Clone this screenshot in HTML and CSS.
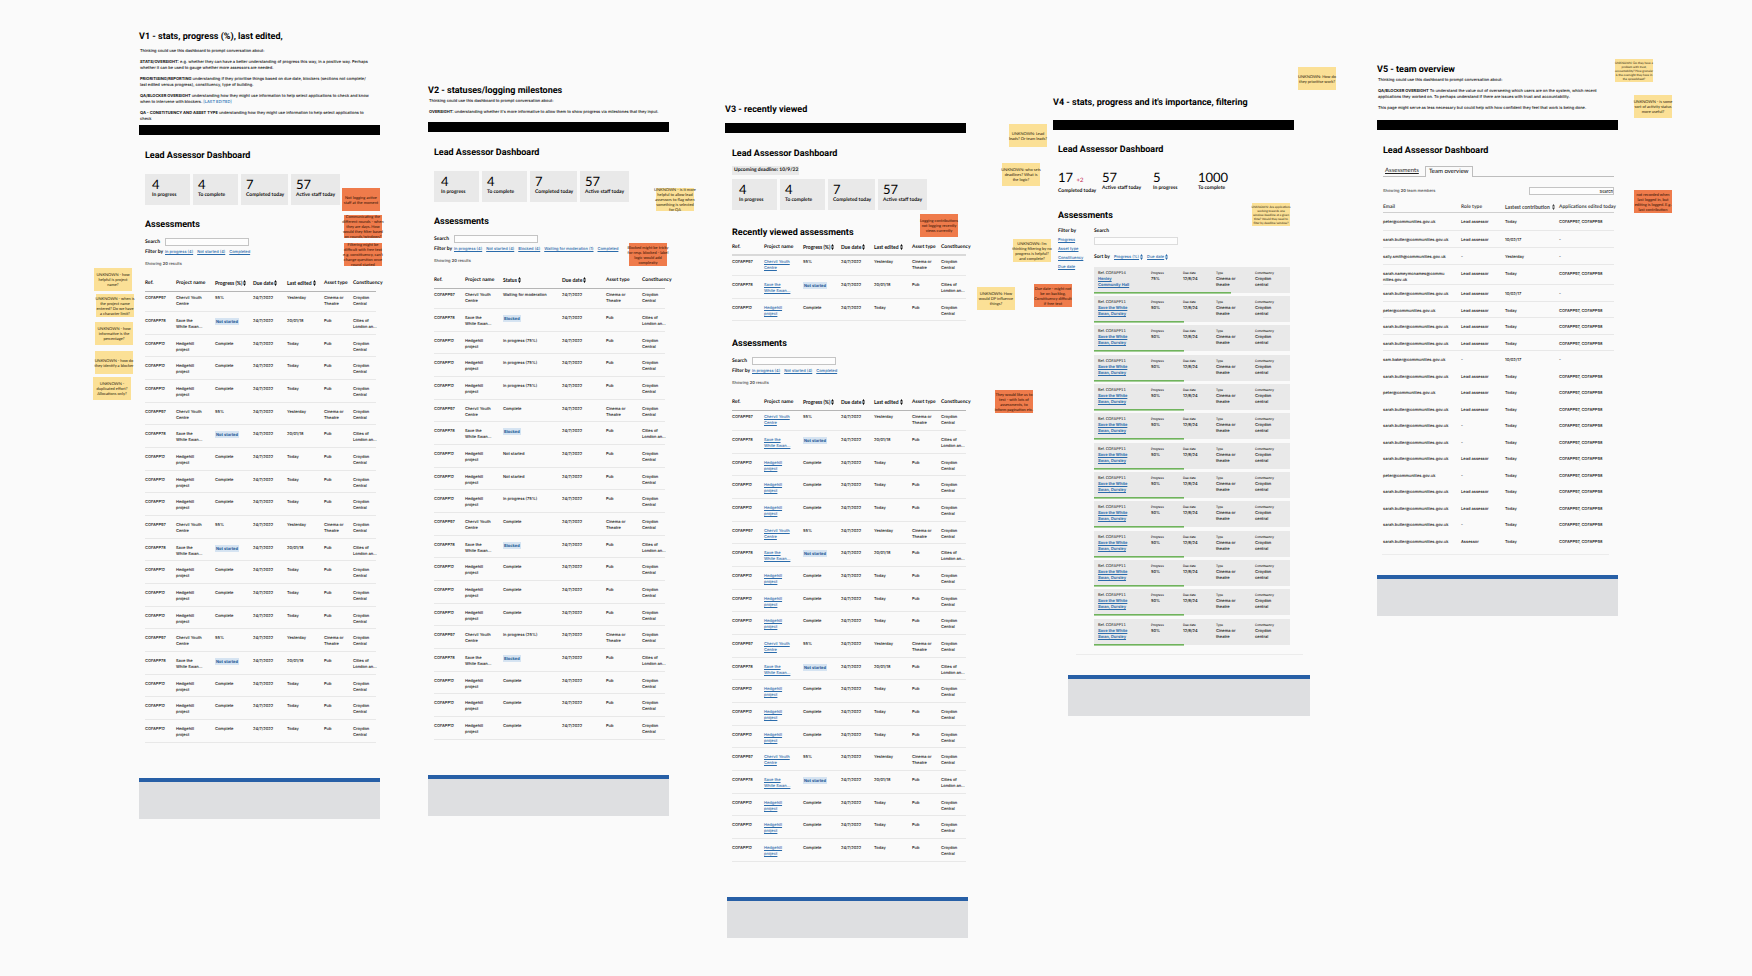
FILE: index.html
```
<!DOCTYPE html>
<html lang="en">
<head>
<meta charset="utf-8">
<title>Lead Assessor Dashboard concepts</title>
<link rel="stylesheet" href="styles.css">
</head>
<body>
<main class="canvas">

<section class="board board-v1">
  <h2 class="board-title">V1 - stats, progress (%), last edited,</h2>
  <div class="intro intro-spaced">
    <p>Thinking could use this dashboard to prompt conversation about:</p>
    <p><b>STATS/OVERSIGHT:</b> e.g. whether they can have a better understanding of progress this way, in a positive way. Perhaps<br>whether it can be used to gauge whether more assessors are needed.</p>
    <p><b>PRIORITISING/REPORTING</b> understanding if they prioritise things based on due date, blockers (sections not complete/<br>last edited versus progress), constituency, type of building.</p>
    <p><b>QA/BLOCKER OVERSIGHT</b> understanding how they might use information to help select applications to check and know<br>when to intervene with blockers. <span class="accent">[LAST EDITED]</span></p>
    <p><b>QA - CONSTITUENCY AND ASSET TYPE</b> understanding how they might use information to help select applications to<br>check</p>
  </div>
  <div class="topbar topbar-close"></div>
  <div class="page">
    <h1 class="heading">Lead Assessor Dashboard</h1>
    <div class="stats" data-stats></div>
    <h2 class="heading heading-section">Assessments</h2>
    <div class="search"><label for="s1">Search</label><input id="s1" type="text"></div>
    <nav class="filters"><b>Filter by</b><a href="#">In progress (4)</a><a href="#">Not started (4)</a><a href="#">Completed</a></nav>
    <p class="showing">Showing <b>20</b> results</p>
    <table class="grid" data-table="v1"></table>
  </div>
  <footer class="footer"></footer>
</section>

<section class="board board-v2">
  <h2 class="board-title">V2 - statuses/logging milestones</h2>
  <div class="intro">
    <p>Thinking could use this dashboard to prompt conversation about:</p>
    <p><b>OVERSIGHT:</b> understanding whether it's more informative to allow them to show progress via milestones that they input.</p>
  </div>
  <div class="topbar"></div>
  <div class="page">
    <h1 class="heading">Lead Assessor Dashboard</h1>
    <div class="stats" data-stats></div>
    <h2 class="heading heading-section">Assessments</h2>
    <div class="search"><label for="s2">Search</label><input id="s2" type="text"></div>
    <nav class="filters"><b>Filter by</b><a href="#">In progress (4)</a><a href="#">Not started (4)</a><a href="#">Blocked (4)</a><a href="#">Waiting for moderation (1)</a><a href="#">Completed</a></nav>
    <p class="showing">Showing <b>20</b> results</p>
    <table class="grid" data-table="v2"></table>
  </div>
  <footer class="footer"></footer>
</section>

<section class="board board-v3">
  <h2 class="board-title">V3 - recently viewed</h2>
  <div class="topbar"></div>
  <div class="page">
    <h1 class="heading">Lead Assessor Dashboard</h1>
    <p class="deadline">Upcoming deadline: 10/9/22</p>
    <div class="stats stats-close" data-stats></div>
    <h2 class="heading heading-wide">Recently viewed assessments</h2>
    <table class="grid grid-close" data-table="recent"></table>
    <h2 class="heading heading-wide">Assessments</h2>
    <div class="search"><label for="s3">Search</label><input id="s3" type="text"></div>
    <nav class="filters"><b>Filter by</b><a href="#">In progress (4)</a><a href="#">Not started (4)</a><a href="#">Completed</a></nav>
    <p class="showing">Showing <b>20</b> results</p>
    <table class="grid" data-table="v3"></table>
  </div>
  <footer class="footer footer-shift"></footer>
</section>

<section class="board board-v4">
  <h2 class="board-title">V4 - stats, progress and it's importance, filtering</h2>
  <div class="topbar topbar-far"></div>
  <div class="page">
    <h1 class="heading">Lead Assessor Dashboard</h1>
    <div class="totals">
      <div><strong>17 <small>+2</small></strong><span>Completed today</span></div>
      <div><strong>57</strong><span>Active staff today</span></div>
      <div><strong>5</strong><span>In progress</span></div>
      <div><strong>1000</strong><span>To complete</span></div>
    </div>
    <h2 class="heading heading-wide">Assessments</h2>
    <div class="browse">
      <nav class="facets"><b>Filter by</b><a href="#">Progress</a><a href="#">Asset type</a><a href="#">Constituency</a><a href="#">Due date</a></nav>
      <div>
        <div class="search search-stacked"><label for="s4">Search</label><input id="s4" type="text"></div>
        <div class="sortby"><b>Sort by</b><a href="#">Progress (%)<svg class="sort" viewBox="0 0 6 12"><path d="M0 5L3 0L6 5ZM0 7L3 12L6 7Z"/></svg></a><a href="#">Due date<svg class="sort" viewBox="0 0 6 12"><path d="M0 5L3 0L6 5ZM0 7L3 12L6 7Z"/></svg></a></div>
        <div class="cards" data-cards></div>
      </div>
    </div>
  </div>
  <hr class="rule">
  <footer class="footer footer-offset"></footer>
</section>

<section class="board board-v5">
  <h2 class="board-title">V5 - team overview</h2>
  <div class="intro">
    <p>Thinking could use this dashboard to prompt conversation about:</p>
    <p><b>QA/BLOCKER OVERSIGHT</b> To understand the value out of overseeing which users are on the system, which recent<br>applications they worked on. To perhaps understand if there are issues with trust and accountability.</p>
    <p>This page might serve as less necessary but could help with how confident they feel that work is being done.</p>
  </div>
  <div class="topbar"></div>
  <div class="page">
    <h1 class="heading">Lead Assessor Dashboard</h1>
    <nav class="tabs"><a href="#" class="tab">Assessments</a><a href="#" class="tab tab-active">Team overview</a></nav>
    <div class="teambar"><p>Showing <b>20</b> team members</p><input type="text" placeholder="Search" aria-label="Search"></div>
    <table class="grid grid-team" data-table="team"></table>
  </div>
  <hr class="rule rule-team">
  <footer class="footer footer-team"></footer>
</section>

<div data-notes></div>
</main>
<script src="boards.js"></script>
</body>
</html>
```
FILE: styles.css
```
* { box-sizing: border-box; margin: 0; padding: 0; }
body {
  background: #fafafa;
  color: #0b0b0b;
  font: 500 4px/6px Inter, "Liberation Sans", sans-serif;
  text-rendering: geometricPrecision;
}
.canvas { position: relative; min-height: 100vh; overflow: hidden; }
a { color: #2a6bab; text-decoration: underline; text-decoration-thickness: 1px; }
.accent { color: #2f78b8; }
input { font: inherit; color: inherit; appearance: none; border: 1px solid #c4c4c4; background: #fdfdfd; border-radius: 0; }

/* Boards */
.board { position: absolute; width: 241px; }
.board-v1 { left: 139px; top: 31px; }
.board-v2 { left: 428px; top: 85px; }
.board-v3 { left: 725px; top: 104px; }
.board-v4 { left: 1053px; top: 97px; }
.board-v5 { left: 1377px; top: 64px; }
.board-title, .heading { font: 700 9px/12px Roboto, sans-serif; color: #000; white-space: nowrap; }
.intro { white-space: nowrap; padding-left: 1px; padding-top: 1px; }
.intro-spaced { padding-top: 5px; }
.intro p + p { margin-top: 5px; }
.topbar { height: 10px; background: #000; margin-top: 7px; }
.topbar-close { margin-top: 3px; }
.topbar-far { margin-top: 11px; }
.board-v5 .topbar { margin-top: 9px; }
.page { padding: 15px 4px 0 6px; }
.board-v3 .page { padding: 15px 0 0 7px; }
.board-v4 .page { padding: 14px 4px 0 5px; }
.board-v5 .page { padding-left: 6px; }
.heading-section { margin-top: 14px; }
.heading-wide { margin-top: 17px; }
.board-v4 .heading-wide { margin-top: 16px; }

/* Statistics */
.stats { display: grid; grid-template-columns: 45px 45px 47px 49px; gap: 3px; margin-top: 12px; }
.stats-close { margin-top: 4px; }
.stat { height: 31px; background: #e9e9e9; padding: 3px 0 0 7px; white-space: nowrap; }
.stat + .stat { padding-left: 5px; }
.stat strong, .totals strong { display: block; font: 400 13px/15px Lato, sans-serif; color: #000; }
.stat span, .totals span { display: block; font: 700 5px/6px Lato, sans-serif; }
.deadline { width: 67px; height: 9px; margin-top: 6px; padding-left: 2px; background: #e9e9e9; font: 700 5px/9px Lato, sans-serif; white-space: nowrap; }
.totals { display: grid; grid-template-columns: 44px 51px 45px 1fr; margin-top: 14px; white-space: nowrap; }
.totals small { font-size: 6px; color: #c2224f; }

/* Search and filters */
.search { display: flex; align-items: center; margin-top: 7px; }
.search label, .filters b, .facets b, .sortby b { width: 20px; font: 700 5px/6px Lato, sans-serif; white-space: nowrap; }
.search input { width: 84px; height: 8px; }
.search-stacked { display: block; margin-top: 0; }
.search-stacked label { display: block; margin-bottom: 3px; }
.search-stacked input { display: block; border-color: #dcdcdc; }
.filters { display: flex; margin-top: 3px; white-space: nowrap; }
.filters a { margin-right: 4px; }
.filters a:last-child { margin-right: 0; }
.showing { margin-top: 6px; color: #505050; }
.teambar { display: flex; justify-content: space-between; align-items: center; margin-top: 10px; color: #505050; }
.teambar input { width: 85px; height: 8px; text-align: right; }
.teambar input::placeholder { color: #222; }

/* Tables */
.grid { width: 100%; table-layout: fixed; border-collapse: separate; border-spacing: 0; margin-top: 10px; }
.board-v3 .grid { width: 234px; }
.grid-close { margin-top: 2px; }
.grid th { height: 15px; padding-top: 3px; vertical-align: top; text-align: left; font: 700 5px/6px Lato, sans-serif; white-space: nowrap; border-bottom: 1px solid #b5b5b5; }
.grid button { font: inherit; color: inherit; border: 0; background: none; }
.sort { width: 3px; height: 6px; margin-left: 1px; fill: currentColor; vertical-align: bottom; }
.grid td { height: 23px; padding-top: 6px; vertical-align: top; white-space: nowrap; border-bottom: 1px solid #e8e8e8; }
.grid tbody tr:nth-child(3n) td { height: 22px; }
.grid tbody tr:first-child td { height: 20px; padding-top: 3px; }
.grid-close th { border-bottom: 2px solid #d9d9d9; }
.badge { display: inline-block; height: 7px; padding: 0 1px; background: #d6e4f2; color: #1d5a96; font-weight: 700; line-height: 7px; }
.grid-team { margin-top: 4px; }
.grid-team th { height: 14px; padding-top: 5px; color: #444; border-color: #cfcfcf; }
.grid-team tbody tr td { height: 17px; padding-top: 6px; }
.grid-team tbody tr:first-child td { height: 18px; padding-top: 6px; }
.grid-team tbody tr:nth-child(3n) td { height: 17px; }
.grid-team tbody tr:nth-child(4) td { height: 20px; }
.grid-team tbody tr:nth-child(n+6):nth-child(even) td { height: 16px; }
.grid-team tbody tr:nth-child(n+9) td { border-color: transparent; }

/* Tabs */
.tabs { display: flex; height: 11px; margin-top: 9px; padding-left: 2px; border-bottom: 1px solid #bdbdbd; font-size: 6px; line-height: 9px; }
.tab { width: 40px; color: #222; font: 400 6px/9px Lato, sans-serif; white-space: nowrap; }
.tab-active { width: 48px; height: 11px; padding-left: 3px; line-height: 10px; border: 1px solid #bdbdbd; border-bottom: 0; background: #fafafa; text-decoration: none; color: #000; }

/* Cards */
.browse { display: grid; grid-template-columns: 36px 1fr; margin-top: 6px; }
.facets { display: flex; flex-direction: column; align-items: flex-start; gap: 3px; }
.sortby { display: flex; margin-top: 9px; white-space: nowrap; }
.sortby a { margin-right: 4px; }
.cards { margin-top: 7px; }
.card { display: grid; grid-template-columns: 53px 32px 33px 39px 1fr; position: relative; height: 26px; margin-bottom: 3px; padding: 3px 0 0 4px; background: #e9e9e9; white-space: nowrap; }
.card:nth-child(3n) { margin-bottom: 4px; }
.card small { display: block; font: 500 3px/6px Inter, sans-serif; }
.card div:first-child small { font: 400 4px/6px Lato, sans-serif; }
.card a { font-weight: 700; }
.card-progress { position: absolute; left: 0; bottom: 0; height: 1px; background: #6fb35c; box-shadow: 0 1px #a5cf98; }

.rule { border: 0; height: 1px; background: #ececec; width: 227px; margin: 6px 0 0 23px; }
.rule-team { margin: 5px 0 0 5px; }
.footer { height: 41px; margin-top: 35px; border-top: 4px solid #275fa6; background: #dedfe1; }
.footer-shift { margin-left: 2px; margin-right: -2px; }
.footer-offset { margin: 20px -16px 0 15px; }
.footer-team { margin-top: 20px; }

/* Sticky notes */
.note { position: absolute; display: grid; place-content: center; width: 38px; height: 23px; text-align: center; font: 400 4px/5px Lato, sans-serif; color: #2a220c; background: #fbe096; white-space: nowrap; }
.note-orange { background: #ef7b4b; color: #2e0f03; }
.note-small { font-size: 3px; line-height: 4px; }
```
FILE: boards.js
```
const ARROWS = '<svg class="sort" viewBox="0 0 6 12"><path d="M0 5L3 0L6 5ZM0 7L3 12L6 7Z"/></svg>';
const sortable = label => `<button type="button">${label}${ARROWS}</button>`;

const STATS = [["4", "In progress"], ["4", "To complete"], ["7", "Completed today"], ["57", "Active staff today"]];
document.querySelectorAll("[data-stats]").forEach(el => {
  el.innerHTML = STATS.map(([n, label]) => `<div class="stat"><strong>${n}</strong><span>${label}</span></div>`).join("");
});

const PROJECTS = {
  97: { name: "Chervil Youth<br>Centre", progress: "55%", edited: "Yesterday", type: "Cinema or<br>Theatre", area: "Croydon<br>Central" },
  78: { name: "Save the<br>White Swan...", progress: "Not started", edited: "20/01/18", type: "Pub", area: "Cities of<br>London an..." },
  12: { name: "Hedgehill<br>project", progress: "Complete", edited: "Today", type: "Pub", area: "Croydon<br>Central" }
};
const ORDER = [97, 78, 12, 12, 12, 97, 78, 12, 12, 12, 97, 78, 12, 12, 12, 97, 78, 12, 12, 12];
const STATUSES = ["Waiting for moderation", "Blocked", "In progress (75%)", "In progress (75%)", "In progress (75%)", "Complete", "Blocked", "Not started", "Not started", "In progress (75%)", "Complete", "Blocked", "Complete", "Complete", "Complete", "In progress (25%)", "Blocked", "Complete", "Complete", "Complete"];

const badge = text => `<span class="badge">${text}</span>`;
const progressRow = linked => id => {
  const p = PROJECTS[id];
  return ["COFAPP" + id, linked ? `<a href="#">${p.name}</a>` : p.name, id === 78 ? badge(p.progress) : p.progress, "24/7/2022", p.edited, p.type, p.area];
};
const statusRow = (id, i) => {
  const p = PROJECTS[id], s = STATUSES[i];
  return ["COFAPP" + id, p.name, s === "Blocked" ? badge(s) : s, "24/7/2022", p.type, p.area];
};
const PROGRESS_HEAD = ["Ref.", "Project name", sortable("Progress (%)"), sortable("Due date"), sortable("Last edited"), "Asset type", "Constituency"];

const S = "sarah.butler@communities.gov.uk", P = "peter@communities.gov.uk", L = "Lead assessor", T = "Today", A = "COFAPP97, COFAPP98";
const TEAM = [
  [P, L, T, A], [S, L, "10/02/17", "-"], ["sally.smith@communities.gov.uk", "-", "Yesterday", "-"],
  ["sarah.nameymcnames@commu<br>nities.gov.uk", L, T, A], [S, L, "10/02/17", "-"], [P, L, T, A], [S, L, T, A], [S, L, T, A],
  ["sam.baker@communities.gov.uk", "-", "10/02/17", "-"], [S, L, T, A], [P, L, T, A], [S, L, T, A], [S, "-", T, A],
  [S, "-", T, A], [S, L, T, A], [P, "-", T, A], [S, L, T, A], [S, L, T, A], [S, "-", T, A], [S, "Assessor", T, A]
];

const TABLES = {
  v1: { cols: [31, 39, 38, 34, 37, 29, 23], head: PROGRESS_HEAD, rows: ORDER.map(progressRow(false)) },
  v2: { cols: [31, 38, 59, 44, 36, 23], head: ["Ref.", "Project name", sortable("Status"), sortable("Due date"), "Asset type", "Constituency"], rows: ORDER.map(statusRow) },
  recent: { cols: [32, 39, 38, 33, 38, 29, 25], head: PROGRESS_HEAD, rows: [97, 78, 12].map(progressRow(true)) },
  v3: { cols: [32, 39, 38, 33, 38, 29, 25], head: PROGRESS_HEAD, rows: ORDER.map(progressRow(true)) },
  team: { cols: [78, 44, 54, 55], head: ["Email", "Role type", sortable("Lastest contribution "), "Applications edited today"], rows: TEAM }
};
document.querySelectorAll("[data-table]").forEach(el => {
  const t = TABLES[el.dataset.table];
  el.innerHTML = `<colgroup>${t.cols.map(w => `<col style="width:${w}px">`).join("")}</colgroup>`
    + `<thead><tr>${t.head.map(h => `<th scope="col">${h}</th>`).join("")}</tr></thead>`
    + `<tbody>${t.rows.map(r => `<tr>${r.map(c => `<td>${c}</td>`).join("")}</tr>`).join("")}</tbody>`;
});

document.querySelector("[data-cards]").innerHTML = Array.from({ length: 13 }, (_, i) => {
  const first = i === 0;
  return `<article class="card"><div><small>Ref. ${first ? "COFAPP14" : "COFAPP11"}</small><a href="#">${first ? "Henley<br>Community Hall" : "Save the White<br>Swan, Dursley"}</a></div>`
    + `<div><small>Progress</small>${first ? "75%" : "50%"}</div><div><small>Due date</small>12/8/24</div>`
    + `<div><small>Type</small>Cinema or<br>theatre</div><div><small>Constituency</small>Croydon<br>central</div>`
    + `<span class="card-progress" style="width:${first ? 70 : 46}%"></span></article>`;
}).join("");

const NOTES = [
  [342, 188, "orange", "Not logging active<br>staff at the moment"],
  [344, 215, "orange", "Communicating the<br>different rounds - when<br>they are days. How<br>would they filter based<br>on rounds/windows?"],
  [344, 243, "orange", "Filtering might be<br>difficult with free text<br>e.g. constituency, can't<br>change question once<br>round started"],
  [94, 268, "", "UNKNOWN - how<br>helpful is project<br>name?"],
  [96, 294, "", "UNKNOWN - when is<br>the project name<br>entered? Do we have<br>a character limit?"],
  [95, 322, "", "UNKNOWN - how<br>informative is the<br>percentage?"],
  [95, 351, "", "UNKNOWN - how do<br>they identify a blocker"],
  [93, 377, "", "UNKNOWN -<br>duplicated effort?<br>Allocations only?"],
  [656, 188, "", "UNKNOWN - is it more<br>helpful to allow lead<br>assessors to flag when<br>something is selected<br>for QA"],
  [629, 243, "orange", "Blocked might be tricky<br>for resp. blocked - label<br>logic would add<br>complexity"],
  [920, 214, "orange", "Logging contributions<br>not logging recently<br>views currently"],
  [995, 390, "orange", "They would like us to<br>test - with lots of<br>assessments, to<br>inform pagination etc."],
  [1009, 124, "", "UNKNOWN: Lead<br>leads? Or team leads?"],
  [1002, 163, "", "UNKNOWN: who sets<br>deadlines? What is<br>the logic?"],
  [1013, 239, "", "UNKNOWN: I'm<br>thinking filtering by no<br>progress is helpful?<br>and complete?"],
  [977, 287, "", "UNKNOWN: How<br>would DP influence<br>things?"],
  [1034, 284, "orange", "Due date - might not<br>be on backlog,<br>Constituency difficult<br>if free text"],
  [1298, 67, "", "UNKNOWN: How do<br>they prioritise work?"],
  [1252, 203, "small", "UNKNOWN: Are applications<br>working towards one<br>window/deadline at a given<br>time? Would they need to<br>filter by deadline/window?"],
  [1615, 59, "small", "UNKNOWN: Do they have a<br>problem with trust,<br>accountability? How granular<br>is the oversight they have in<br>the spreadsheet?"],
  [1634, 95, "", "UNKNOWN - is some<br>sort of activity status<br>more useful?"],
  [1634, 190, "orange", "not recorded when<br>last logged in, but<br>editing is logged. E.g.<br>last contribution"]
];
document.querySelector("[data-notes]").innerHTML = NOTES.map(([x, y, kind, text]) =>
  `<div class="note ${kind ? "note-" + kind : ""}" style="left:${x}px;top:${y}px"><p>${text}</p></div>`).join("");
```
